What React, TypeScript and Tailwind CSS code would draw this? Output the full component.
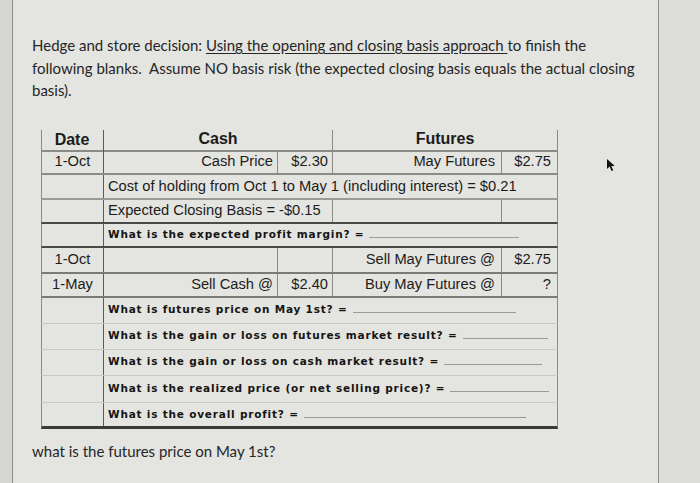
import React from 'react';

const sans = { fontFamily: '"Liberation Sans", Arial, sans-serif' };

function Blank({ w }: { w: number }) {
  return (
    <span
      className="ml-[5px] inline-block border-b border-[#9a9a96] align-baseline"
      style={{ width: w, height: 9 }}
    />
  );
}

function Q({ text, w }: { text: string; w: number }) {
  return (
    <span
      className="text-[10.5px] font-bold tracking-[0.8px] text-[#141414]"
      style={{ fontFamily: '"DejaVu Sans", Verdana, sans-serif' }}
    >
      {text}
      <Blank w={w} />
    </span>
  );
}

function Row({
  h,
  line,
  date,
  children,
}: {
  h: number;
  line: string;
  date?: string;
  children: React.ReactNode;
}) {
  return (
    <div className={`flex border-x border-[#8a8a86] ${line}`} style={{ height: h }}>
      <div className="flex w-[62px] shrink-0 items-center justify-center border-r border-[#5a5a58]">
        {date}
      </div>
      {children}
    </div>
  );
}

function Split({ a, b, c, d }: { a?: string; b?: string; c?: string; d?: string }) {
  return (
    <>
      <div className="flex h-full w-[174px] shrink-0 items-center justify-end border-r border-[#8a8a86] pr-[4px]">
        {a}
      </div>
      <div className="flex h-full w-[55px] shrink-0 items-center justify-end border-r border-[#8a8a86] pr-[4px]">
        {b}
      </div>
      <div className="flex h-full w-[169px] shrink-0 items-center justify-end border-r border-[#8a8a86] pr-[6px]">
        {c}
      </div>
      <div className="flex h-full flex-1 items-center justify-end pr-[6px]">{d}</div>
    </>
  );
}

export default function App() {
  return (
    <div className="flex h-[483px] w-[700px] overflow-hidden bg-[#dcdcd8]">
      <div className="w-[12px] shrink-0 bg-[#d6d6d2]" />
      <div className="w-[647px] shrink-0 border-x border-[#8c8c88] bg-[#e4e4e0] pl-[19px] pt-[34px]">
        <p
          className="w-[610px] text-[15px] leading-[22.5px] text-[#262626]"
          style={{ fontFamily: 'Lato, "Open Sans", sans-serif' }}
        >
          Hedge and store decision: <span className="underline underline-offset-2">Using the opening and closing basis approach </span>to finish the following blanks.&nbsp; Assume NO basis risk (the expected closing basis equals the actual closing basis).
        </p>

        <div className="relative ml-[9px] mt-[28px] w-[517px] text-[14.7px] text-[#1c1c1c]" style={sans}>
          <Row h={22} line="border-b-2 border-b-[#8a8a86]" date="">
            <div className="flex h-full w-[229px] shrink-0 items-center justify-center border-r border-[#8a8a86] pb-[2px] text-[16px] font-bold">
              Cash
            </div>
            <div className="flex h-full flex-1 items-center justify-center pb-[2px] text-[16px] font-bold">Futures</div>
          </Row>
          <div className="-mt-[22px] flex h-[20px] w-[62px] items-center justify-center text-[16px] font-bold">
            Date
          </div>
          <Row h={25} line="border-b-2 border-b-[#8a8a86]" date="1-Oct">
            <Split a="Cash Price" b="$2.30" c="May Futures" d="$2.75" />
          </Row>
          <Row h={25} line="border-b-2 border-b-[#9a9a96]">
            <div className="flex h-full items-center pl-[4px]">
              Cost of holding from Oct 1 to May 1 (including interest) = $0.21
            </div>
          </Row>
          <Row h={24} line="border-b-2 border-b-[#4a4a48]">
            <div className="flex h-full w-[229px] shrink-0 items-center border-r border-[#8a8a86] pl-[4px]">
              Expected Closing Basis = -$0.15
            </div>
            <div className="h-full w-[169px] shrink-0 border-r border-[#8a8a86]" />
            <div className="flex-1" />
          </Row>
          <Row h={24} line="border-b-2 border-b-[#4a4a48]">
            <div className="flex h-full items-center pl-[4px]">
              <Q text="What is the expected profit margin? =" w={150} />
            </div>
          </Row>
          <Row h={26} line="border-b-2 border-b-[#7a7a76]" date="1-Oct">
            <Split c="Sell May Futures @" d="$2.75" />
          </Row>
          <Row h={24} line="border-b-2 border-b-[#7a7a76]" date="1-May">
            <Split a="Sell Cash @" b="$2.40" c="Buy May Futures @" d="?" />
          </Row>
          <Row h={26} line="border-b border-b-[#cacac6]">
            <div className="flex h-full items-center pl-[4px]">
              <Q text="What is futures price on May 1st? =" w={163} />
            </div>
          </Row>
          <Row h={26} line="border-b border-b-[#cacac6]">
            <div className="flex h-full items-center pl-[4px]">
              <Q text="What is the gain or loss on futures market result? =" w={85} />
            </div>
          </Row>
          <Row h={26} line="border-b border-b-[#cacac6]">
            <div className="flex h-full items-center pl-[4px]">
              <Q text="What is the gain or loss on cash market result? =" w={98} />
            </div>
          </Row>
          <Row h={27} line="border-b border-b-[#cacac6]">
            <div className="flex h-full items-center pl-[4px]">
              <Q text="What is the realized price (or net selling price)? =" w={99} />
            </div>
          </Row>
          <Row h={26} line="border-b-[3px] border-b-[#3a3a38]">
            <div className="flex h-full items-center pl-[4px] pt-[2px]">
              <Q text="What is the overall profit? =" w={222} />
            </div>
          </Row>
        </div>

        <p
          className="mt-[11px] text-[15px] leading-[22px] text-[#262626]"
          style={{ fontFamily: 'Lato, "Open Sans", sans-serif' }}
        >
          what is the futures price on May 1st?
        </p>
      </div>
      <div className="relative flex-1">
        <svg
          className="absolute left-[-53px] top-[158px]"
          width="10"
          height="14"
          viewBox="0 0 10 14"
        >
          <path d="M1 1 L1 11 L3.6 8.6 L5.6 13 L7.2 12.3 L5.3 8 L8.8 8 Z" fill="#111" />
        </svg>
      </div>
    </div>
  );
}
